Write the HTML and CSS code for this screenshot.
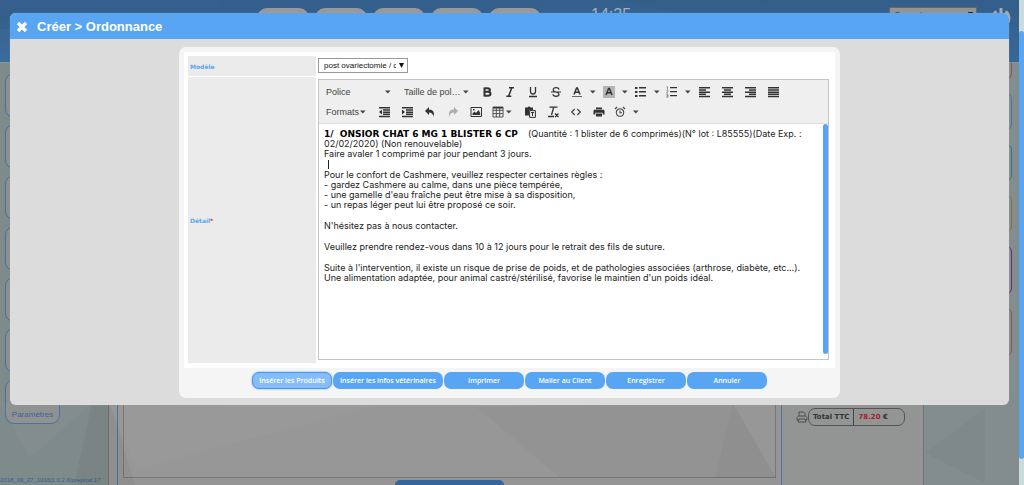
FILE: index.html
```html
<!DOCTYPE html>
<html lang="fr">
<head>
<meta charset="utf-8">
<title>Créer &gt; Ordonnance</title>
<link rel="stylesheet" href="styles.css">
</head>
<body>
<svg class="defs" aria-hidden="true">
  <symbol id="caret" viewBox="0 0 6 4"><path d="M0 .5h5.6L2.8 3.6z"/></symbol>
</svg>
<div class="app">
  <div class="page">
    <header class="top">
      <svg class="facets" viewBox="0 0 1019 62" preserveAspectRatio="none" aria-hidden="true"><path d="M0 7h220V0h324v9l-20 20H0z" fill="#305d8a" opacity=".35"/><path d="M620 0h399v62H900z" fill="#315c88" opacity=".3"/></svg>
      <svg class="brand" viewBox="0 0 18 4" aria-hidden="true"><path d="M0 1h5v1H0zM10 1h5v1h-5z"/></svg>
      <nav class="tabs"><span></span><span></span><span></span><span></span><span></span></nav>
      <time class="clock">14:25</time>
      <div class="pick lang"><select aria-label="Langue"><option>Français</option></select></div>
      <svg class="power" viewBox="0 0 20 20" aria-hidden="true"><path d="M10 1v9M5.500 4.500a8 8 0 1 0 9 0" fill="none" stroke="#a3a9ae" stroke-width="3"/></svg>
    </header>
    <div class="columns">
      <svg class="facets" viewBox="0 0 1019 422" preserveAspectRatio="none" aria-hidden="true">
        <path d="M92 340l18 0 25 82H74z" fill="#000" opacity=".04"/><path d="M0 340h92L30 395z" fill="#fff" opacity=".03"/>
        <path d="M110 344l26 62 250-66z" fill="#fff" opacity=".02"/><path d="M476 344l84 71h216l-43-75z" fill="#000" opacity=".025"/>
        <path d="M733 340l-18 75h61zM985 345v75l-60-30z" fill="#000" opacity=".025"/>
      </svg>
      <aside class="side"><span class="tile"></span><span class="tile"></span><span class="tile"></span><span class="tile"></span><span class="tile"></span><span class="tile"></span><a class="tile" href="#">Paramètres</a><small>2018_09_27_1016|1.0.2.6|preprod.17</small></aside>
      <main class="work"><div class="sheet"></div></main>
      <section class="totals">
        <div class="total">
          <svg viewBox="0 0 12 12" aria-hidden="true"><path d="M3 5V1h4.500L9 2.500V5M2.500 9H1V6.500L2.500 5h7L11 6.500V9H9.500M3 8h6l1 3H2z" fill="none" stroke="#4c4f4f"/></svg>
          <dl><dt>Total TTC</dt><dd><b>78.20</b> €</dd></dl>
        </div>
      </section>
      <aside class="tags"><span class="red first"></span><span class="blue"></span><span class="teal"></span><span class="gold"></span><span class="purple"></span><span class="red last"></span></aside>
    </div>
    <span class="action"></span>
  </div>
  <div class="scroll"><span></span></div>
</div>

<section class="modal" role="dialog" aria-labelledby="title">
  <header class="bar">
    <button class="close" aria-label="Fermer"><svg viewBox="0 0 12 12"><path d="M2 2l8 8M10 2l-8 8" stroke="#fff" stroke-width="3.400"/></svg></button>
    <h1 id="title">Créer &gt; Ordonnance</h1>
  </header>
  <form class="panel">
    <div class="fields">
      <label class="name" for="model">Modèle</label>
      <div class="field"><div class="pick model"><select id="model"><option>post ovariectomie / c</option></select></div></div>
      <label class="name" id="detail">Détail<em>*</em></label>
      <div class="field">
        <div class="editor">
          <div class="tools">
            <div class="row">
              <button type="button" class="menu">Police<svg class="caret"><use href="#caret"/></svg></button>
              <button type="button" class="menu">Taille de pol…<svg class="caret"><use href="#caret"/></svg></button>
              <button type="button" class="tool" aria-label="Gras"><svg viewBox="0 0 12 12"><path d="M3.500 1.500v9M3.500 2.200h3q2.400 0 2.400 1.800T6.500 5.800h-3M3.500 5.800h3.300q2.700 0 2.700 2T6.800 9.800H3.500" fill="none" stroke="#333" stroke-width="2"/></svg></button>
              <button type="button" class="tool" aria-label="Italique"><svg viewBox="0 0 12 12"><path d="M5 1.700h5M2.300 10.300h5M7.700 2L4.700 10" fill="none" stroke="#333" stroke-width="1.500"/></svg></button>
              <button type="button" class="tool" aria-label="Souligné"><svg viewBox="0 0 12 12"><path d="M3.500 1v4.500q0 2.500 2.500 2.500t2.500-2.500V1M2 10.500h8" fill="none" stroke="#333" stroke-width="1.300"/></svg></button>
              <button type="button" class="tool" aria-label="Barré"><svg viewBox="0 0 12 12"><path d="M9 3.600Q8.600 1.700 6 1.700T3.200 3.700Q3.200 5.400 6 6t3 2.300Q9 10.300 6 10.300T3 8.300M1 6h10" fill="none" stroke="#333" stroke-width="1.200"/></svg></button>
              <button type="button" class="split" aria-label="Couleur du texte"><svg viewBox="0 0 12 12"><path d="M3 8.500L5.600 2h.8L9 8.500M4 6.300h4" fill="none" stroke="#333" stroke-width="1.500"/><path d="M1 10.500h10" stroke="#666"/></svg><svg class="caret"><use href="#caret"/></svg></button>
              <button type="button" class="split" aria-label="Couleur de fond"><svg viewBox="0 0 12 12"><path d="M0 0h12v12H0z" fill="#b5b5b5"/><path d="M3 9L5.600 2.500h.8L9 9M4 6.800h4" fill="none" stroke="#333" stroke-width="1.500"/></svg><svg class="caret"><use href="#caret"/></svg></button>
              <button type="button" class="split list" aria-label="Puces"><svg viewBox="0 0 12 12"><path d="M0 1h2.500v2H0zM0 5h2.500v2H0zM0 9h2.500v2H0zM4 1h7v1.500H4zM4 5h7v1.500H4zM4 9h7v1.500H4z"/></svg><svg class="caret"><use href="#caret"/></svg></button>
              <button type="button" class="split list" aria-label="Numérotation"><svg viewBox="0 0 12 12"><path d="M4 1h7v1.300H4zM4 5h7v1.300H4zM4 9h7v1.300H4z"/><path d="M.5.8h1v2.700M.3 4.500h1.600v1L.5 7H2M.3 8.600H2v2.600H.3M.5 9.900H2" fill="none" stroke="#777" stroke-width=".8"/></svg><svg class="caret"><use href="#caret"/></svg></button>
              <button type="button" class="tool" aria-label="Aligner à gauche"><svg viewBox="0 0 12 12"><path d="M0 1h11v1.500H0zM0 3.200h7v1.500H0zM0 5.400h11v1.500H0zM0 7.600h7v1.500H0zM0 9.800h11v1.500H0z"/></svg></button>
              <button type="button" class="tool" aria-label="Centrer"><svg viewBox="0 0 12 12"><path d="M0 1h11v1.500H0zM2 3.200h7v1.500H2zM0 5.400h11v1.500H0zM2 7.600h7v1.500H2zM0 9.800h11v1.500H0z"/></svg></button>
              <button type="button" class="tool" aria-label="Aligner à droite"><svg viewBox="0 0 12 12"><path d="M0 1h11v1.500H0zM4 3.200h7v1.500H4zM0 5.400h11v1.500H0zM4 7.600h7v1.500H4zM0 9.800h11v1.500H0z"/></svg></button>
              <button type="button" class="tool" aria-label="Justifier"><svg viewBox="0 0 12 12"><path d="M0 1h11v1.500H0zM0 3.200h11v1.500H0zM0 5.400h11v1.500H0zM0 7.600h11v1.500H0zM0 9.800h11v1.500H0z"/></svg></button>
            </div>
            <div class="row">
              <button type="button" class="menu formats">Formats<svg class="caret"><use href="#caret"/></svg></button>
              <button type="button" class="tool" aria-label="Diminuer le retrait"><svg viewBox="0 0 12 12"><path d="M1 1h11v1.500H1zM5 3.200h7v1.500H5zM5 5.400h7v1.500H5zM5 7.600h7v1.500H5zM1 9.800h11v1.500H1zM4 3.500v5L1 6z"/></svg></button>
              <button type="button" class="tool" aria-label="Augmenter le retrait"><svg viewBox="0 0 12 12"><path d="M1 1h11v1.500H1zM5 3.200h7v1.500H5zM5 5.400h7v1.500H5zM5 7.600h7v1.500H5zM1 9.800h11v1.500H1zM1 3.500v5l3-2.500z"/></svg></button>
              <button type="button" class="tool" aria-label="Annuler la saisie"><svg viewBox="0 0 12 12"><path d="M5 1v2.500q6.500 0 4.500 7.500Q9.200 6.500 5 6.500V9L1 5z"/></svg></button>
              <button type="button" class="tool faded" aria-label="Rétablir"><svg viewBox="0 0 12 12"><path d="M7 1v2.500Q.5 3.500 2.500 11 2.800 6.500 7 6.500V9l4-4z"/></svg></button>
              <button type="button" class="tool" aria-label="Image"><svg viewBox="0 0 12 12"><path d="M1 1.500h10.500v9H1z" fill="none" stroke="#333"/><path d="M2.500 9V7.500L4.500 5.500l1.500 1.500 2.500-3L10.200 7v2zM3 3h1.500v1.500H3z"/></svg></button>
              <button type="button" class="split table" aria-label="Tableau"><svg viewBox="0 0 12 12"><path d="M1 1h10v10H1zM1 4.300h10M1 7.600h10M4.300 1v10M7.700 1v10" fill="none" stroke="#444" stroke-width=".9"/><path d="M1 1h10v1.500H1z"/></svg><svg class="caret"><use href="#caret"/></svg></button>
              <button type="button" class="tool" aria-label="Coller en texte"><svg viewBox="0 0 12 12"><path d="M1 1.500h2.500L4.500.5h1l1 1H9V4H5v5.500H1z"/><path d="M5.600 4.600h5.800v6.800H5.600z" fill="#eee" stroke="#333"/><path d="M7 6.500h3M8.500 6.500v3.500" stroke="#333"/></svg></button>
              <button type="button" class="tool" aria-label="Effacer le format"><svg viewBox="0 0 12 12"><path d="M2.500 1.200h8M6.800 1L4.500 9M1 10.500h6M8 7.500l3.500 3.500M11.500 7.500L8 11" fill="none" stroke="#333" stroke-width="1.300"/></svg></button>
              <button type="button" class="tool" aria-label="Code source"><svg viewBox="0 0 12 12"><path d="M4.700 3L1.700 6l3 3M7.300 3l3 3-3 3" fill="none" stroke="#444" stroke-width="1.200"/></svg></button>
              <button type="button" class="tool" aria-label="Aperçu"><svg viewBox="0 0 12 12"><path d="M3 1.500h6V3.200H3zM1.500 3.800h9q1 0 1 1v3.700H9.700V6.800H2.300v1.700H.5V4.800q0-1 1-1zM3 7.500h6v3H3z"/></svg></button>
              <button type="button" class="split" aria-label="Date et heure"><svg viewBox="0 0 12 12"><path d="M6 2.700a3.800 3.800 0 1 0 .01 0M6 4.500v2.300h2M1 3l2-2M11 3L9 1" fill="none" stroke="#444" stroke-width="1.100"/></svg><svg class="caret"><use href="#caret"/></svg></button>
            </div>
          </div>
          <div class="content">
            <div class="text" contenteditable="true" role="textbox" aria-labelledby="detail">
              <p><strong>1/&nbsp; ONSIOR CHAT 6 MG 1 BLISTER 6 CP</strong> &nbsp;&nbsp; (Quantité : 1 blister de 6 comprimés)(N° lot : L85555)(Date Exp. :<br>02/02/2020) (Non renouvelable)<br>Faire avaler 1 comprimé par jour pendant 3 jours.<br><i class="cursor"></i></p>
              <p>Pour le confort de Cashmere, veuillez respecter certaines règles :<br>- gardez Cashmere au calme, dans une pièce tempérée,<br>- une gamelle d'eau fraîche peut être mise à sa disposition,<br>- un repas léger peut lui être proposé ce soir.<br><br></p>
              <p>N'hésitez pas à nous contacter.<br><br></p>
              <p>Veuillez prendre rendez-vous dans 10 à 12 jours pour le retrait des fils de suture.<br><br></p>
              <p>Suite à l'intervention, il existe un risque de prise de poids, et de pathologies associées (arthrose, diabète, etc...).<br>Une alimentation adaptée, pour animal castré/stérilisé, favorise le maintien d'un poids idéal.</p>
            </div>
            <span class="thumb"></span>
          </div>
        </div>
      </div>
    </div>
    <div class="buttons">
      <button type="button" class="focus">Insérer les Produits</button><button type="button">Insérer les infos vétérinaires</button><button type="button">Imprimer</button><button type="button">Mailer au Client</button><button type="button">Enregistrer</button><button type="button">Annuler</button>
    </div>
  </form>
</section>
</body>
</html>
```
FILE: styles.css
```css
* { box-sizing: border-box; }
body { margin: 0; font-family: "DejaVu Sans", Verdana, sans-serif; font-size: 8px; }
button { border: 0; padding: 0; background: none; font: inherit; }
.defs { position: absolute; width: 0; height: 0; }

.pick { position: relative; }
.pick select { display: block; width: 100%; height: 100%; padding: 0 11px 0 5px; border: 1px solid #999; border-radius: 0; appearance: none; background: #fff; color: #111; font: 8px "Liberation Sans", Arial, sans-serif; }
.pick::after { content: ""; position: absolute; right: 4px; top: 5px; width: 5px; height: 5px; background: #111; clip-path: polygon(0 0, 100% 0, 50% 100%); pointer-events: none; }

.app { display: flex; height: 100vh; overflow: hidden; }
.page { position: relative; flex: 1; display: flex; flex-direction: column; background: #959595; }
.facets { position: absolute; inset: 0; width: 100%; height: 100%; pointer-events: none; }
.top { position: relative; display: flex; align-items: flex-start; height: 63px; flex: none; padding: 7px 8px 0 35px; background: linear-gradient(#355f8c, #3c6c9a); border-bottom: 1px solid #8296a8; }
.top > * { z-index: 1; }
.top > .facets { z-index: 0; }
.brand { width: 18px; height: 4px; margin-top: 5px; fill: #8fa5ba; }
.tabs { display: flex; gap: 6px; margin: 1px 50px 0 204px; }
.tabs span { width: 52px; height: 40px; border-radius: 10px; background: #999; }
.clock { flex: 1; color: #9fb0c0; font: 16px/16px "Liberation Sans", Arial, sans-serif; }
.lang { width: 88px; height: 14px; margin-right: 14px; }
.lang select { border-color: #666; background: #939393; color: #222; }
.power { width: 20px; height: 20px; }

.columns { position: relative; flex: 1; min-height: 0; display: flex; }
.columns .facets { z-index: 1; }
.side { width: 109px; padding: 10px 0 0 5px; display: flex; flex-direction: column; gap: 6px; background: #7f8a8a; border-right: 1px solid #6e7272; }
.tile { flex: none; width: 55px; height: 45px; padding-top: 30px; border: 1px solid #466f9e; border-radius: 9px; background: #8d8f8f; color: #315f96; font: 8px/10px "Liberation Sans", Arial, sans-serif; text-align: center; text-decoration: none; }
.side small { margin: auto 0 0 -5px; padding-bottom: 1px; color: #315f96; font: 6px/7px "Liberation Sans", Arial, sans-serif; white-space: nowrap; }
.work { flex: 1; margin-left: 8px; padding: 0 5px 7px; border: solid #4d7196; border-width: 0 1px; }
.sheet { height: 100%; border: 1px solid #777; background: #979797; }
.totals { width: 142px; padding: 345px 0 0 14px; background: #939594; border-right: 1px solid #747777; }
.total { display: flex; align-items: center; }
.total svg { width: 12px; height: 12px; }
.total dl { display: flex; width: 97px; margin: 0; border: 1px solid #555; border-radius: 7px; font-size: 7px; font-weight: bold; line-height: 16px; color: #333; }
.total dt { padding: 0 4px; border-right: 1px solid #444; }
.total dd { margin: 0; padding: 0 4px; }
.total b { color: #a51f2b; }
.tags { flex: none; width: 95px; display: flex; flex-direction: column; gap: 12px; background: #838d8d; }
.tags span { width: 88px; height: 39px; border: 1px solid; border-radius: 7px; }
.tags .first { height: 17px; border-top: 0; border-radius: 0 0 7px 7px; }
.tags .purple, .tags .last { height: 50px; }
.tags .purple { color: #6b2785; }
.tags .red { color: #8b5555; }
.tags .blue { color: #4a7595; }
.tags .teal { color: #347575; }
.tags .gold { color: #80703d; }
.action { position: absolute; left: 395px; bottom: 0; width: 109px; height: 5px; border-radius: 6px 6px 0 0; background: #35659a; }
.scroll { width: 5px; padding: 31px 0 26px; background: #cadbda; display: flex; }
.scroll span { flex: 1; border-radius: 3px; background: #58a5f3; }

.modal { position: absolute; z-index: 2; top: 13px; left: 10px; right: 15px; overflow: hidden; border-radius: 6px; background: #dcdcdc; box-shadow: 0 0 1px #aaa; }
.bar { display: flex; align-items: center; gap: 9px; height: 26px; padding: 1px 0 0 6px; background: #58a5f3; }
.close { width: 12px; height: 12px; }
.close svg { display: block; width: 12px; height: 12px; }
.bar h1 { margin: 0; color: #fff; font: bold 13px/16px "Liberation Sans", Arial, sans-serif; }
.panel { max-width: 661px; margin: 8px auto 7px; padding: 5px 5px 9px; border-radius: 7px; background: #f5f5f5; }
.fields { display: grid; grid-template-columns: 128px 1fr; gap: 1px 2px; padding: 4px 6px 5px 4px; background: #fff; }
.name { display: flex; align-items: center; padding-left: 2px; background: #ebebeb; color: #58a5f3; font-size: 6px; font-weight: bold; }
.name em { color: #e22; font-style: normal; }
.field { padding: 2px 0 3px; }
.model { width: 90px; height: 15px; }
.editor { border: 1px solid #c4c4c4; }
.tools { display: flex; flex-direction: column; padding: 2px 2px 1px; background: #efefef; border-bottom: 1px solid #ddd; }
.row { display: flex; height: 20px; }
.menu { display: flex; align-items: center; justify-content: space-between; width: 76px; margin-right: 2px; padding: 0 6px 0 5px; color: #444; font: 9px "Liberation Sans", Arial, sans-serif; }
.menu:nth-child(2) { margin-right: 0; }
.menu.formats { width: 51px; margin-right: 0; }
.tool, .split { display: flex; align-items: center; justify-content: center; width: 23px; fill: #333; }
.tool svg, .split svg { width: 12px; height: 12px; }
.split { width: 32px; justify-content: flex-start; gap: 7px; padding-left: 4px; }
.split.list { width: 31px; }
.split.table { width: 31px; gap: 2px; padding-left: 5px; }
.menu .caret, .split .caret { flex: none; width: 6px; height: 4px; fill: #444; }
.faded { opacity: .35; }
.content { display: flex; height: 235px; background: #fff; }
.text { flex: 1; padding: 5px 0 0 5px; outline: 0; color: #222; font-family: Inter, Verdana, sans-serif; font-size: 9px; line-height: 10px; }
.text p { margin: 0 0 1px; }
.text strong { color: #000; font-family: "DejaVu Sans", Verdana, sans-serif; }
.cursor { display: inline-block; width: 1px; height: 9px; margin-left: 4px; background: #222; vertical-align: bottom; }
.thumb { width: 5px; height: 230px; border-radius: 3px; background: #58a5f3; }
.buttons { display: flex; justify-content: center; gap: 1px; padding-top: 4px; }
.buttons button { min-width: 80px; height: 17px; padding: 0 7px; border-radius: 7px; background: #58a5f3; color: #fff; font: 600 7px "Open Sans", sans-serif; }
.buttons .focus { padding: 0 6px; border: 1px solid #4796ea; background: #86bdf7; box-shadow: 0 0 2px #58a5f3; }
```
